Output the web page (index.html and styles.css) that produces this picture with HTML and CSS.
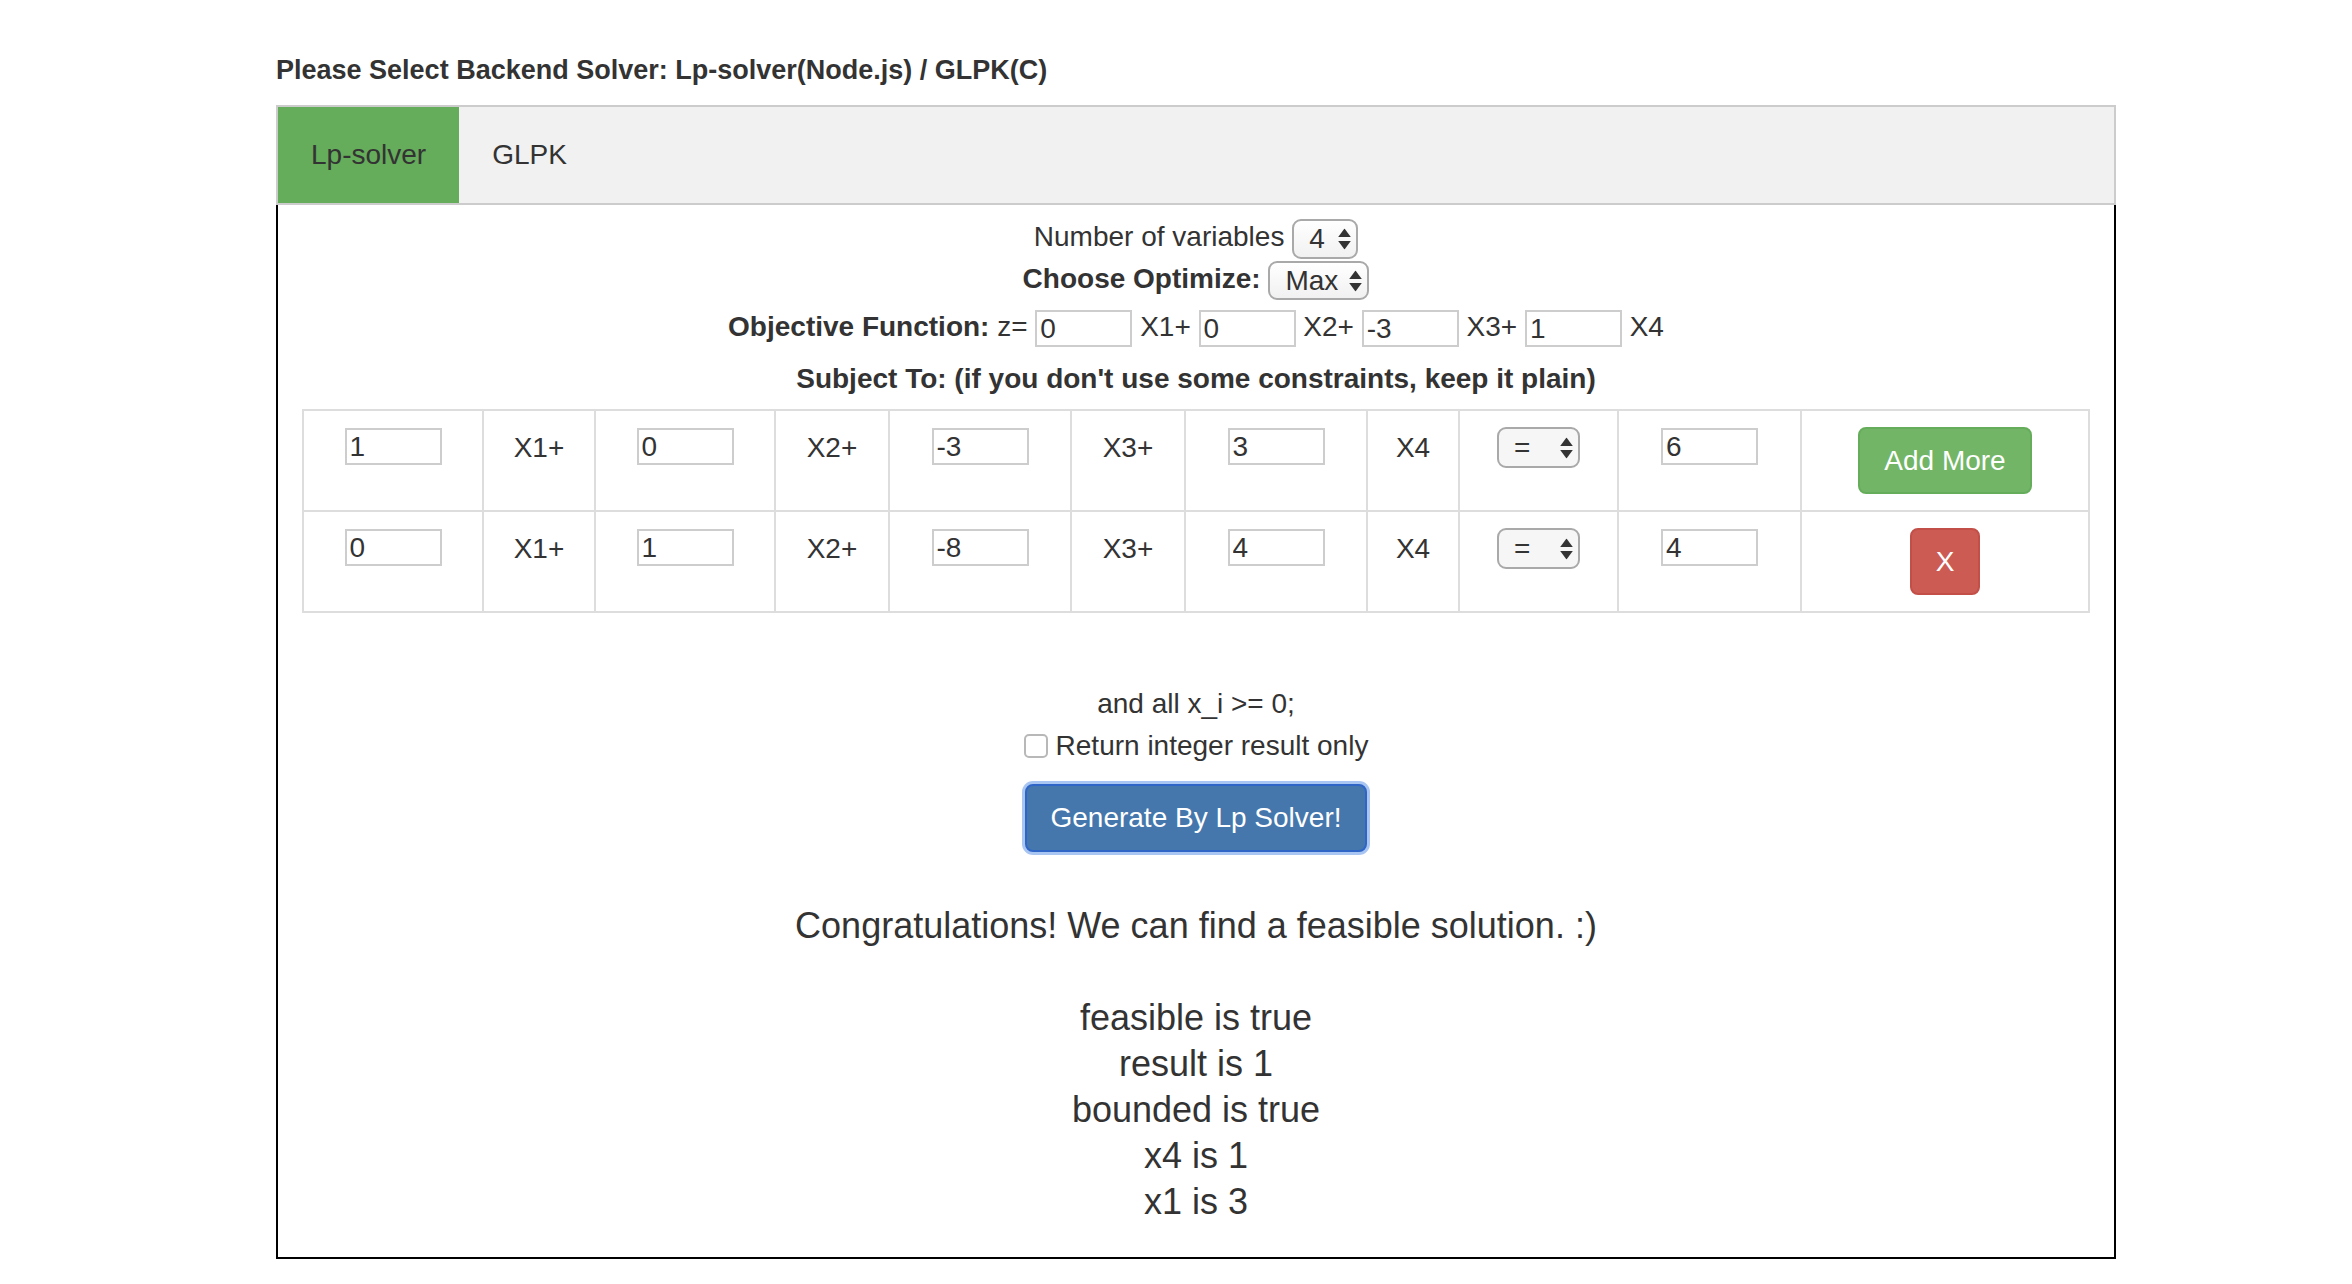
FILE: index.html
```html
<!DOCTYPE html>
<html lang="en">
<head>
<meta charset="utf-8">
<title>LP Solver</title>
<link rel="stylesheet" href="styles.css">
</head>
<body>
<div class="page">
  <div class="title">Please Select Backend Solver: Lp-solver(Node.js) / GLPK(C)</div>
  <div class="tabs">
    <button class="tab active">Lp-solver</button>
    <button class="tab">GLPK</button>
  </div>
  <div class="panel">
    <div class="line">Number of variables <span class="sel"><select class="s-num"><option>4</option></select><svg viewBox="0 0 12 20"><polygon points="0,8 6,0 12,8" /><polygon points="0,12 12,12 6,20" /></svg></span></div>
    <div class="line"><b>Choose Optimize:</b> <span class="sel"><select class="s-opt"><option>Max</option></select><svg viewBox="0 0 12 20"><polygon points="0,8 6,0 12,8" /><polygon points="0,12 12,12 6,20" /></svg></span></div>
    <div class="line line-obj"><b>Objective Function:</b> z= <input class="field" value="0"> X1+ <input class="field" value="0"> X2+ <input class="field" value="-3"> X3+ <input class="field" value="1"> X4</div>
    <div class="line line-sub"><b>Subject To: (if you don't use some constraints, keep it plain)</b></div>
    <table class="cons">
      <colgroup>
        <col class="w-in"><col class="w-l1"><col class="w-in"><col class="w-l2"><col class="w-in2"><col class="w-l2"><col class="w-in2"><col class="w-l4"><col class="w-op"><col class="w-rhs"><col class="w-act">
      </colgroup>
      <tr>
        <td><input class="field" value="1"></td>
        <td>X1+</td>
        <td><input class="field" value="0"></td>
        <td>X2+</td>
        <td><input class="field" value="-3"></td>
        <td>X3+</td>
        <td><input class="field" value="3"></td>
        <td>X4</td>
        <td><span class="sel sel-top"><select class="s-eq"><option>=</option></select><svg viewBox="0 0 12 20"><polygon points="0,8 6,0 12,8" /><polygon points="0,12 12,12 6,20" /></svg></span></td>
        <td><input class="field" value="6"></td>
        <td><button class="btn btn-add">Add More</button></td>
      </tr>
      <tr>
        <td><input class="field" value="0"></td>
        <td>X1+</td>
        <td><input class="field" value="1"></td>
        <td>X2+</td>
        <td><input class="field" value="-8"></td>
        <td>X3+</td>
        <td><input class="field" value="4"></td>
        <td>X4</td>
        <td><span class="sel sel-top"><select class="s-eq"><option>=</option></select><svg viewBox="0 0 12 20"><polygon points="0,8 6,0 12,8" /><polygon points="0,12 12,12 6,20" /></svg></span></td>
        <td><input class="field" value="4"></td>
        <td><button class="btn btn-del">X</button></td>
      </tr>
    </table>
    <div class="tail">
      <div class="line">and all x_i &gt;= 0;</div>
      <div class="line"><label><input type="checkbox" class="chk"><span>Return integer result only</span></label></div>
      <div class="gen-wrap"><button class="btn btn-gen">Generate By Lp Solver!</button></div>
    </div>
    <h4 class="congrats">Congratulations! We can find a feasible solution. :)</h4>
    <div class="results">
      <div>feasible is true</div>
      <div>result is 1</div>
      <div>bounded is true</div>
      <div>x4 is 1</div>
      <div>x1 is 3</div>
    </div>
  </div>
</div>
</body>
</html>
```

FILE: styles.css
```css
* { box-sizing: border-box; }
html, body { margin: 0; padding: 0; background: #fff; }
body {
  font-family: "Liberation Sans", Arial, Helvetica, sans-serif;
  font-size: 28px;
  line-height: 42px;
  color: #333;
}
.page { width: 1840px; margin-left: 276px; padding-top: 49px; }
.title { font-weight: bold; font-size: 27px; line-height: 42px; margin-bottom: 14px; }

.tabs { display: flex; border: 2px solid #ccc; background: #f1f1f1; }
.tab {
  border: 0; margin: 0; background: transparent;
  font: inherit; color: #333; line-height: 42px;
  padding: 27px 33px;
}
.tab.active { background: #65ac5b; }

.panel {
  border: 2px solid #000; border-top: 0;
  padding: 11px 0 32px; text-align: center;
}
.line { height: 42px; line-height: 42px; white-space: nowrap; }
.line-obj { height: 54px; line-height: 54px; }
.line-sub { height: 50px; line-height: 50px; }

.field {
  width: 97px; height: 37px; margin: 0;
  border: 2px solid #cdcdcd; background: #fff;
  font: inherit; font-size: 28px; line-height: 33px; color: #333;
  padding: 0 3px; vertical-align: middle;
}

.sel { position: relative; display: inline-block; vertical-align: middle; line-height: 0; }
.sel select {
  -webkit-appearance: none; appearance: none; display: block; margin: 0;
  font: inherit; font-size: 28px; line-height: 36px; color: #333;
  height: 40px; padding: 0 0 0 15px; text-align: left;
  border: 2px solid #a9a9a9; border-radius: 9px;
  background: linear-gradient(#ffffff, #f1f1f1);
}
.sel svg {
  position: absolute; right: 7px; top: 50%; transform: translateY(-50%);
  width: 13px; height: 21px; fill: #333; pointer-events: none;
}
.s-num { width: 66px; }
.sel select.s-opt { width: 101px; height: 39px; }
.sel select.s-eq { width: 83px; height: 41px; background: #f6f6f6; }
.sel-top { vertical-align: top; }

.cons {
  border-collapse: collapse; table-layout: fixed;
  width: 1786px; margin: 5px auto 0;
}
.cons td {
  border: 2px solid #ddd; padding: 16px;
  vertical-align: top; text-align: center; line-height: 42px;
}
.cons .field { vertical-align: top; margin-top: 1px; }
.w-in { width: 180px; }
.w-l1 { width: 112px; }
.w-l2 { width: 114px; }
.w-in2 { width: 182px; }
.w-l4 { width: 92px; }
.w-op { width: 159px; }
.w-rhs { width: 183px; }
.w-act { width: 288px; }

.btn {
  display: inline-block; vertical-align: top; margin: 0;
  font: inherit; font-size: 28px; line-height: 39px; color: #fff;
  padding: 12px 24px; border: 2px solid transparent; border-radius: 8px;
}
.btn-add { background: #72b567; border-color: #66ad5b; }
.btn-del { background: #cc5b53; border-color: #c24f48; }

.tail { margin-top: 70px; }
.chk {
  -webkit-appearance: none; appearance: none;
  width: 24px; height: 24px; margin: 0 8px 0 0;
  border: 2px solid #b8b8b8; border-radius: 5px; background: #fff;
  vertical-align: middle; position: relative; top: -2px;
}
.gen-wrap { margin-top: 16px; line-height: 0; }
.btn-gen {
  background: #4577ad; border-color: #2f65c6;
  box-shadow: 0 0 0 3px #a9c6f2;
  padding: 12px 23px; line-height: 40px;
  position: relative; top: 1px;
}

.congrats { font-size: 36px; line-height: 40px; font-weight: normal; margin: 55px 0 0; }
.results { margin-top: 49px; font-size: 36px; line-height: 46px; }
```
